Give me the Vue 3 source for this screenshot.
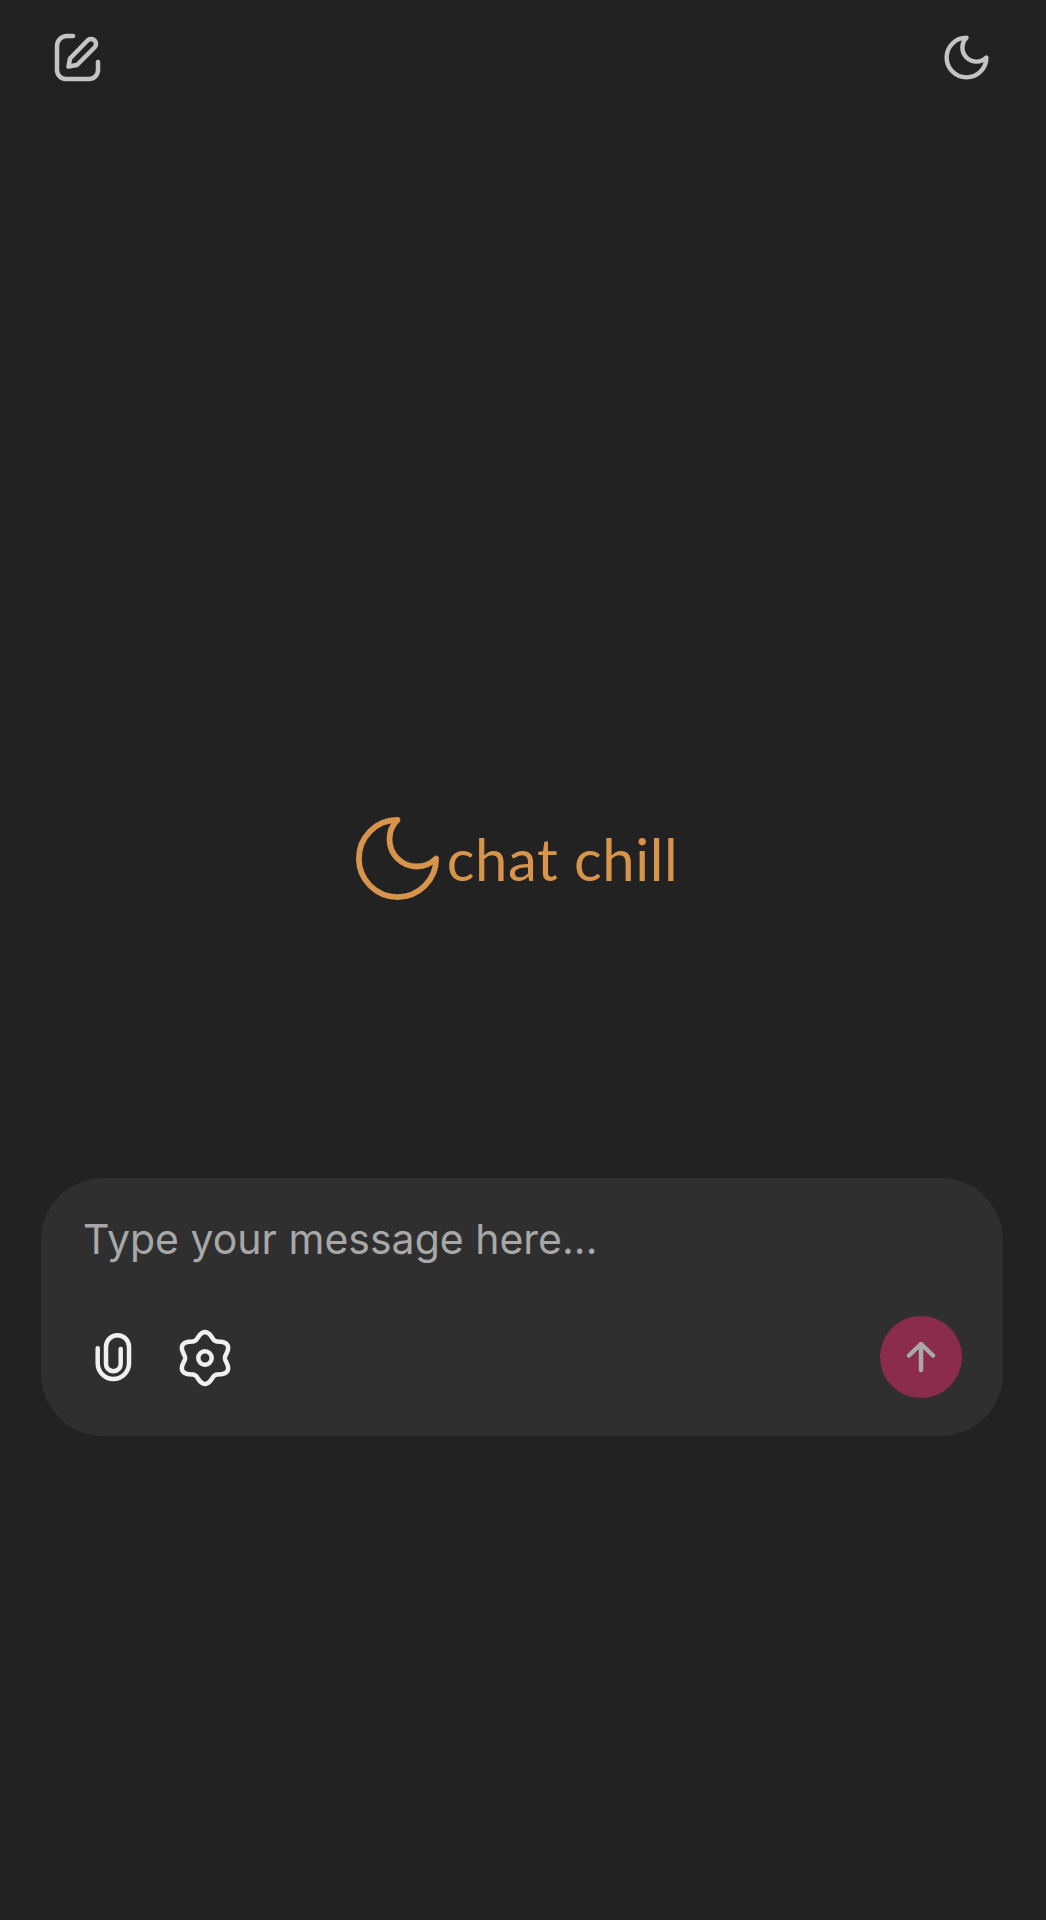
<template>
  <div class="page">
    <header class="top-bar">
      <button class="icon-btn">
        <svg width="55" height="55" viewBox="20 10 55 55" fill="none" stroke="#c4c4c4" stroke-width="4.500" stroke-linecap="round" stroke-linejoin="round">
          <path d="M43 16H37a10 10 0 0 0-10 10V50a9 9 0 0 0 9 9H59a9 9 0 0 0 9-9V42" />
          <path d="M38.500 46.500l1.500-8L58 20a5 5 0 0 1 7 7L47 45z" />
        </svg>
      </button>
      <button class="icon-btn">
        <svg width="53" height="53" viewBox="0 0 24 24" fill="none" stroke="#c4c4c4" stroke-width="2" stroke-linecap="round" stroke-linejoin="round">
          <path d="M12 3a6 6 0 0 0 9 9 9 9 0 1 1-9-9Z" />
        </svg>
      </button>
    </header>

    <div class="logo">
      <svg width="103" height="103" viewBox="0 0 24 24" fill="none" stroke="#d8944b" stroke-width="1.350" stroke-linecap="round" stroke-linejoin="round">
        <path d="M12 3a6 6 0 0 0 9 9 9 9 0 1 1-9-9Z" />
      </svg>
      <span class="logo-text">chat chill</span>
    </div>

    <section class="composer">
      <div class="placeholder">Type your message here...</div>
      <div class="composer-row">
        <div class="tools">
          <button class="icon-btn">
            <svg width="48" height="64" viewBox="1 -3 48 64" fill="none" stroke="#f0f0f0" stroke-width="4.500" stroke-linecap="round" stroke-linejoin="round">
              <path d="M7.700 20.300V35.300A15.650 15.650 0 0 0 39 35.300V18.700A11.500 11.500 0 0 0 16 18.700V36A7.350 7.350 0 0 0 30.700 36V21" />
            </svg>
          </button>
          <button class="icon-btn">
            <svg width="60" height="60" viewBox="-30 -31 60 60" fill="none" stroke="#f0f0f0" stroke-width="4.500" stroke-linejoin="round">
              <path :d="gearPath" />
              <circle r="6.700" />
            </svg>
          </button>
        </div>
        <button class="send-btn">
          <svg width="40" height="40" viewBox="0 0 40 40" fill="none" stroke="#a9a9a9" stroke-width="4.500" stroke-linecap="round" stroke-linejoin="round">
            <path d="M20 33V7M8 18.500L20 7l12 11.500" />
          </svg>
        </button>
      </div>
    </section>
  </div>
</template>

<script setup>
// six lobed cog outline, polar so the lobes come out even
const points = [];
for (let i = 0; i < 120; i++) {
  const angle = (i / 120) * Math.PI * 2;
  const radius = 22.9 + 3 * Math.cos(angle * 6);
  const x = radius * Math.sin(angle);
  const y = -radius * Math.cos(angle);
  points.push(`${x.toFixed(2)} ${y.toFixed(2)}`);
}
const gearPath = `M${points.join("L")}Z`;
</script>

<style>
body {
  background: #222222;
}
</style>

<style scoped>
.page {
  display: flex;
  flex-direction: column;
  height: 1920px;
  background: #222222;
  font-family: Inter, "Liberation Sans", sans-serif;
}

.top-bar {
  display: flex;
  justify-content: space-between;
  padding: 30px 53px 0 50px;
}

.icon-btn {
  display: flex;
  align-items: center;
  justify-content: center;
  padding: 0;
  border: none;
  background: none;
}

.logo {
  display: flex;
  align-items: center;
  justify-content: center;
  margin-top: 722px;
  padding-right: 22px;
}

.logo-text {
  margin-left: -2px;
  font-family: Lato, sans-serif;
  font-size: 58px;
  font-weight: 400;
  letter-spacing: 0.6px;
  color: #d8944b;
  line-height: 1;
}

.composer {
  display: flex;
  flex-direction: column;
  justify-content: space-between;
  height: 258px;
  margin: 268px 43px 0 41px;
  padding: 37px 41px 38px 42px;
  box-sizing: border-box;
  background: #2f2f2f;
  border-radius: 62px;
}

.placeholder {
  font-size: 41px;
  line-height: 48px;
  color: #a8a8a8;
}

.composer-row {
  display: flex;
  align-items: center;
  justify-content: space-between;
}

.tools {
  display: flex;
  align-items: center;
  gap: 36px;
  padding-left: 8px;
}

.send-btn {
  display: flex;
  align-items: center;
  justify-content: center;
  width: 82px;
  height: 82px;
  padding: 0;
  border: none;
  border-radius: 50%;
  background: #8b2b4d;
}
</style>
